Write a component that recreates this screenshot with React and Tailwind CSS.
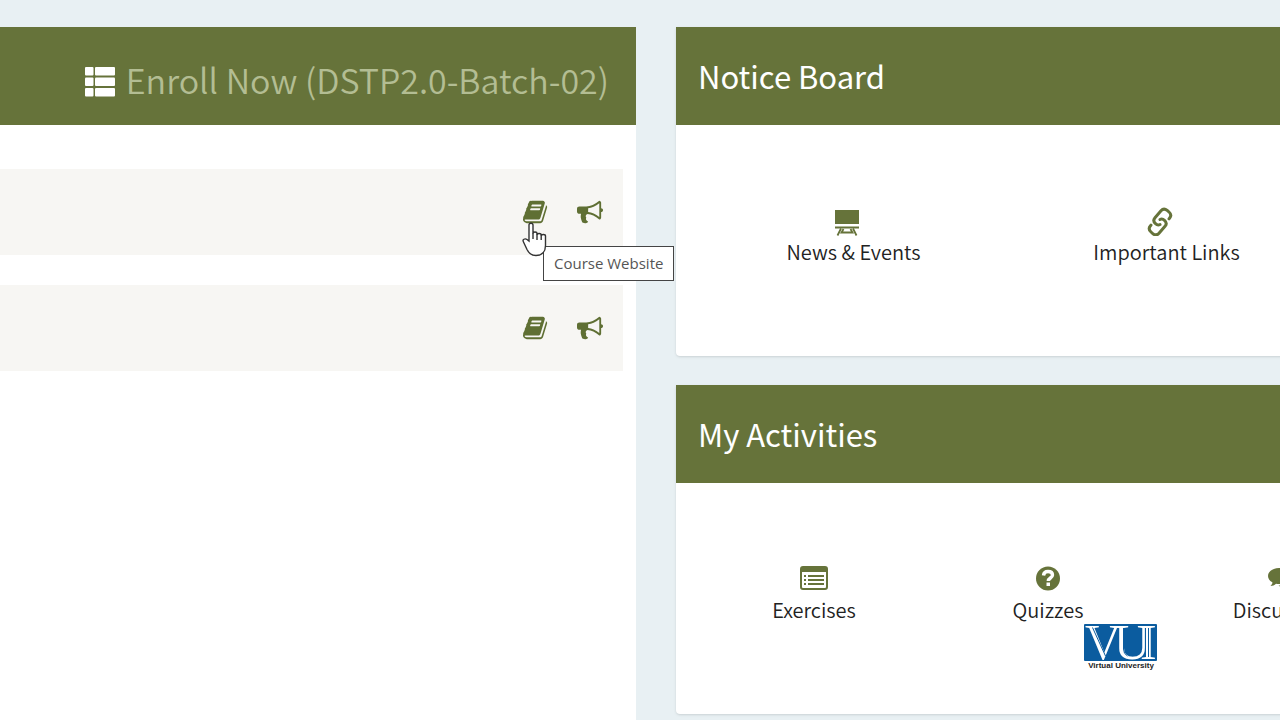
import clsx from 'clsx';

const BookIcon = () => (
  <svg viewBox="0 0 1792 1792" fill="currentColor" aria-hidden="true" className="w-[26px] h-[26px]">
    <path d="M1639 478q40 57 18 129l-275 906q-19 64-76.500 107.500t-122.500 43.500h-923q-77 0-148.500-53.500t-99.500-131.500q-24-67-2-127 0-4 3-27t4-37q1-8-3-21.500t-3-19.500q2-11 8-21t16.500-23.500 16.500-23.500q23-38 45-91.500t30-91.500q3-10 .5-30t-.5-28q3-11 17-28t17-23q21-36 42-92t25-90q1-9-2.500-32t.5-28q4-13 22-30.500t22-22.500q19-26 42.500-84.500t27.500-96.500q1-8-3-25.500t-2-26.500q2-8 9-18t18-23 17-21q8-12 16.500-30.500t15-35 16-36 19.500-32 26.500-23.500 36-11.500 47.500 5.500l-1 3q38-9 51-9h761q74 0 114 56t18 130l-274 906q-36 119-71.500 153.500t-128.500 34.500h-869q-27 0-38 15-11 16-1 43 24 70 144 70h923q29 0 56-15.500t35-41.500l300-987q7-22 5-57 38 15 59 43zm-1064 2q-4 13 2 22.500t20 9.500h608q13 0 25.500-9.500t16.500-22.500l21-64q4-13-2-22.500t-20-9.500h-608q-13 0-25.500 9.500t-16.500 22.500zm-83 256q-4 13 2 22.500t20 9.500h608q13 0 25.500-9.500t16.500-22.500l21-64q4-13-2-22.500t-20-9.500h-608q-13 0-25.500 9.500t-16.500 22.500z" />
  </svg>
);

const BullhornIcon = () => (
  <svg viewBox="0 0 1792 1792" fill="currentColor" aria-hidden="true" className="w-[26px] h-[26px]">
    <path d="M1664 640q53 0 90.500 37.500t37.500 90.500-37.500 90.500-90.500 37.500v384q0 52-38 90t-90 38q-417-347-812-380-58 19-91 66t-31 100.500 40 92.500q-20 33-23 65.500t6 58 33.500 55 48 50 61.500 50.500q-29 58-111.500 83t-168.500 11.500-132-55.500q-7-23-29.500-87.500t-32-94.500-23-89-15-101 3.500-98.500 22-110.500h-122q-66 0-113-47t-47-113v-192q0-66 47-113t113-47h480q435 0 896-384 52 0 90 38t38 90v384zm-128 604v-954q-394 302-768 343v270q377 42 768 341z" />
  </svg>
);

const ThListIcon = () => (
  <svg viewBox="0 0 30 30" fill="currentColor" aria-hidden="true" className="w-[30px] h-[30px]">
    {[0, 10.500, 21].map((y) => (
      <g key={y}>
        <rect x="0" y={y} width="8.500" height="8.500" rx="1" />
        <rect x="10" y={y} width="20" height="8.500" rx="1" />
      </g>
    ))}
  </svg>
);

const BlackboardIcon = () => (
  <svg viewBox="0 0 28 30" fill="currentColor" aria-hidden="true" className="w-7 h-[30px]">
    <path d="M2 4h24v14H2zM2 20.500h24v2H2z" />
    <path d="M8 22.500 4.500 29.500M20 22.500l3.500 7M10.500 23l-2 3.500h11l-2-3.500" fill="none" stroke="currentColor" strokeWidth="1.800" />
  </svg>
);

const LinkIcon = () => (
  <svg viewBox="0 0 28 30" fill="none" stroke="currentColor" strokeWidth="3" strokeLinecap="round" strokeLinejoin="round" aria-hidden="true" className="w-7 h-[30px]">
    <path d="M14 18.500c-1.500.8-3.200.4-4.500-.8-2-1.800-2.200-4-.5-6l6-7c1.800-2 4.200-2 6.200-.3l1.800 1.600c2 1.800 2.300 4 .7 6l-.7.900" />
    <path d="M14 13.500c1.500-.8 3.200-.4 4.500.8 2 1.800 2.200 4 .5 6l-6 7c-1.800 2-4.200 2-6.200.3l-1.800-1.600c-2-1.800-2.300-4-.7-6l.7-.9" />
  </svg>
);

const ListAltIcon = () => (
  <svg viewBox="0 0 28 30" fill="currentColor" aria-hidden="true" className="w-7 h-[30px]">
    <path fillRule="evenodd" d="M3 2h22a3 3 0 0 1 3 3v18a3 3 0 0 1-3 3H3a3 3 0 0 1-3-3V5a3 3 0 0 1 3-3zM2 8v15q0 1 1 1h22q1 0 1-1V8z" />
    <path d="M4 11h2v2H4zM8 11h16v2H8zM4 15h2v2H4zM8 15h16v2H8zM4 19h2v2H4zM8 19h16v2H8z" />
  </svg>
);

const QuestionIcon = () => (
  <svg viewBox="0 0 28 30" aria-hidden="true" className="w-7 h-[30px]">
    <circle cx="14" cy="14.500" r="12" fill="currentColor" />
    <path d="M9.500 11.500c.3-3 2.200-4 4.500-4 2.700 0 4.500 1.400 4.500 3.500 0 3-4.200 3-4.200 6" fill="none" stroke="#fff" strokeWidth="3.400" />
    <path d="M12.500 18.500H16V22h-3.500z" fill="#fff" />
  </svg>
);

const CommentsIcon = () => (
  <svg viewBox="0 0 28 30" fill="currentColor" aria-hidden="true" className="w-7 h-[30px]">
    <path d="M11 4c6 0 11 3.500 11 8s-5 8-11 8c-1 0-2-.1-3-.3C6.500 21 4.500 22 2.500 22c1.200-1.200 1.800-2.300 2-3.500C1.800 17 0 14.700 0 12c0-4.500 5-8 11-8z" />
    <path d="M24 11c2.500 1.400 4 3.400 4 5.700 0 2.300-1.300 4.200-3.500 5.600.2 1.200.8 2.200 2 3.200-2.200 0-4-.8-5.500-2-4 .8-8 0-10.500-2C17 21.500 24 18 24 11z" />
  </svg>
);

const HandCursor = () => (
  <svg viewBox="0 0 26 36" aria-hidden="true" className="absolute -left-px top-[23px] z-10 w-[26px] h-9">
    <path
      d="M7 19V3C7 .6 11 .6 11 3v8.500c0-2 4-2 4 0V13c0-2 4.200-2 4.200 0v1c0-2 4.300-2 4.300 0v9.500c0 6-3.500 10-9.500 10-4.500 0-7.500-3-9-6L1.500 20c-1.500-2.500 1.500-4 3.500-2.500z"
      fill="#fff"
      stroke="#333"
      strokeWidth="1.400"
    />
    <path d="M11 11v6M15 12.500V18M19.200 13.500V18" stroke="#333" strokeWidth="1.400" />
  </svg>
);

const UniversityLogo = () => (
  <svg viewBox="0 0 73 47" role="img" aria-label="Virtual University" className="absolute right-[123px] top-[624px] w-[73px] h-[47px] overflow-visible">
    <rect width="73" height="37" rx="1" fill="#0b5c9f" />
    <g fill="#fff" fontFamily="Liberation Serif, serif" fontSize="50">
      <text x="1" y="35">V</text>
      <text x="30" y="35">U</text>
      <text x="56" y="35">I</text>
    </g>
    <path d="M8.500 3.500 21.500 32M39.500 4v21q0 5 4 7M64.500 4v29" fill="none" stroke="#0b5c9f" strokeWidth="1" />
    <text x="37" y="44" textAnchor="middle" fontFamily="Liberation Sans, sans-serif" fontWeight="700" fontSize="8" fill="#222">
      Virtual University
    </text>
  </svg>
);

const Panel = ({ title, columns, iconClass, items }) => (
  <section className="min-w-[744px] bg-white rounded-b-sm shadow-sm">
    <header className="flex items-center h-[98px] px-[22px] bg-[#66733a]">
      <h2 className="pb-px text-[31px] leading-10 text-white">{title}</h2>
    </header>
    <nav className={clsx('grid px-[21px] pt-[81px] h-[231px] items-start', columns)}>
      {items.map(({ label, Icon }) => (
        <a key={label} href="#" className="flex flex-col items-center text-[#66733a]">
          <span className={iconClass}>
            <Icon />
          </span>
          <span className="text-xl leading-8 font-[350] text-[#222]">{label}</span>
        </a>
      ))}
    </nav>
  </section>
);

const CourseRow = ({ showTooltip }) => (
  <li className="flex items-center justify-end gap-7 h-[86px] pr-5 bg-[#f7f6f3] text-[#5f6f33]">
    <a href="#" aria-label="Course Website" className="relative">
      <BookIcon />
      {showTooltip && (
        <>
          <span role="tooltip" className="absolute left-5 top-[47px] z-10 px-[10px] py-1 whitespace-nowrap border border-[#444] bg-white font-['Open_Sans',sans-serif] text-[15px] leading-[25px] text-[#555]">
            Course Website
          </span>
          <HandCursor />
        </>
      )}
    </a>
    <a href="#" aria-label="Announcements">
      <BullhornIcon />
    </a>
  </li>
);

const App = () => {
  const notices = [
    { label: 'News & Events', Icon: BlackboardIcon },
    { label: 'Important Links', Icon: LinkIcon },
  ];
  const activities = [
    { label: 'Exercises', Icon: ListAltIcon },
    { label: 'Quizzes', Icon: QuestionIcon },
    { label: 'Discussion', Icon: CommentsIcon },
  ];

  return (
    <div className="relative grid grid-cols-[159fr_151fr] gap-10 min-h-screen pt-[27px] overflow-hidden bg-[#e8f0f3] font-['Noto_Sans_CJK_SC',sans-serif]">
      <main className="bg-white">
        <header className="flex items-center justify-end h-[98px] pt-3 pr-[27px] bg-[#66733a]">
          <a href="#" className="flex items-center gap-[11px] text-white">
            <ThListIcon />
            <span className="pb-1 text-[34px] leading-10 font-[350] text-[#b3bd93]">Enroll Now (DSTP2.0-Batch-02)</span>
          </a>
        </header>
        <ul className="flex flex-col gap-[30px] pt-11 pr-[13px]">
          <CourseRow showTooltip />
          <CourseRow />
        </ul>
      </main>

      <aside className="flex flex-col gap-[29px] min-w-0">
        <Panel title="Notice Board" columns="grid-cols-[313px_313px]" iconClass="pr-[14px]" items={notices} />
        <Panel title="My Activities" columns="grid-cols-3" items={activities} />
      </aside>

      <UniversityLogo />
    </div>
  );
};

export default App;
